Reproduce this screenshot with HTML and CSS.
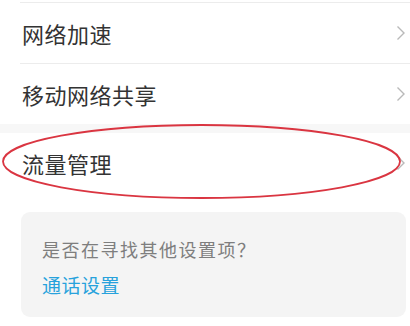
FILE: index.html
```html
<!DOCTYPE html>
<html lang="zh-CN">
<head>
<meta charset="utf-8">
<title>设置</title>
<link rel="stylesheet" href="styles.css">
</head>
<body>
<div class="page">
  <div class="group">
    <div class="row">
      <span class="label">网络加速</span>
      <svg class="chev" width="10" height="16" viewBox="0 0 10 16"><path d="M1.5 1.5 L8 8 L1.5 14.5" fill="none" stroke="#b9b9b9" stroke-width="1.4"/></svg>
    </div>
    <div class="row">
      <span class="label">移动网络共享</span>
      <svg class="chev" width="10" height="16" viewBox="0 0 10 16"><path d="M1.5 1.5 L8 8 L1.5 14.5" fill="none" stroke="#b9b9b9" stroke-width="1.4"/></svg>
    </div>
  </div>
  <div class="band"></div>
  <div class="group">
    <div class="row plain">
      <span class="label">流量管理</span>
      <svg class="chev" width="10" height="16" viewBox="0 0 10 16"><path d="M1.5 1.5 L8 8 L1.5 14.5" fill="none" stroke="#b9b9b9" stroke-width="1.4"/></svg>
    </div>
  </div>
  <div class="tip-wrap">
    <div class="tip">
      <div class="tip-q">是否在寻找其他设置项<span class="qmark">？</span></div>
      <div class="tip-link">通话设置</div>
    </div>
  </div>
  <svg class="mark" width="410" height="326" viewBox="0 0 410 326">
    <ellipse cx="201.5" cy="161.5" rx="198.5" ry="36.5" fill="none" stroke="#da3541" stroke-width="1.8"/>
  </svg>
</div>
</body>
</html>
```

FILE: styles.css
```css
html, body {
  margin: 0;
  padding: 0;
  background: #ffffff;
}
.page {
  position: relative;
  width: 410px;
  height: 326px;
  overflow: hidden;
  padding-top: 2px;
  box-sizing: border-box;
  font-family: "Noto Sans CJK SC", "Noto Sans", sans-serif;
}
.group {
  background: #ffffff;
}
.row {
  display: flex;
  align-items: center;
  justify-content: space-between;
  height: 60px;
  margin-left: 20px;
  padding-left: 2px;
  padding-right: 4px;
  border-top: 1px solid #ececec;
}
.row.plain {
  border-top: none;
}
.label {
  font-size: 22px;
  color: #333333;
  letter-spacing: 0.5px;
}
.chev {
  display: block;
}
.band {
  height: 9px;
  background: #f7f7f7;
}
.tip-wrap {
  padding: 19px 4px 0 21px;
}
.tip {
  background: #f4f4f4;
  border-radius: 9px;
  height: 105px;
  box-sizing: border-box;
  padding: 19px 0 0 21px;
}
.tip-q {
  font-size: 18px;
  line-height: 36px;
  color: #7e7e7e;
  letter-spacing: 1.5px;
}
.qmark {
  font-family: "Noto Sans CJK JP", "Noto Sans CJK SC", sans-serif;
}
.tip-link {
  font-size: 19px;
  line-height: 36px;
  color: #27a2dc;
  letter-spacing: 0.5px;
}
.mark {
  position: absolute;
  left: 0;
  top: 0;
}
```
